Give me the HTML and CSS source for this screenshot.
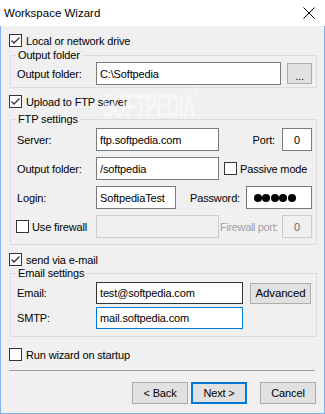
FILE: index.html
```html
<!DOCTYPE html>
<html lang="en">
<head>
  <meta charset="UTF-8">
  <meta name="viewport" content="width=device-width, initial-scale=1.0">
  <title>Workspace Wizard</title>
  <link rel="stylesheet" href="styles.css">
</head>
<body>
  <div class="window">
    <div class="titlebar">
      <span class="title">Workspace Wizard</span>
      <svg class="close" width="12" height="12" viewBox="0 0 12 12"><path d="M0.5 0.5 L11.5 11.5 M11.5 0.5 L0.5 11.5" stroke="#000" stroke-width="1" fill="none"/></svg>
    </div>
    <div class="client">
      <label class="check first"><span class="box"><svg width="11" height="11" viewBox="0 0 11 11"><path d="M1.5 5.5 L4 8 L9.5 2.5" stroke="#333" stroke-width="1.3" fill="none"/></svg></span>Local or network drive</label>

      <fieldset class="group g-output">
        <legend>Output folder</legend>
        <div class="row r-first">
          <span class="lbl">Output folder:</span>
          <input class="field w-path" value="C:\Softpedia">
          <button class="btn dots">...</button>
        </div>
      </fieldset>

      <label class="check spaced"><span class="box"><svg width="11" height="11" viewBox="0 0 11 11"><path d="M1.5 5.5 L4 8 L9.5 2.5" stroke="#333" stroke-width="1.3" fill="none"/></svg></span>Upload to FTP server</label>

      <fieldset class="group g-ftp">
        <legend>FTP settings</legend>
        <div class="row r-first">
          <span class="lbl">Server:</span>
          <input class="field w-mid" value="ftp.softpedia.com">
          <span class="push">Port:</span>
          <input class="field w-port" value="0">
        </div>
        <div class="row">
          <span class="lbl">Output folder:</span>
          <input class="field w-mid" value="/softpedia">
          <label class="check passive"><span class="box"></span>Passive mode</label>
        </div>
        <div class="row">
          <span class="lbl">Login:</span>
          <input class="field w-login" value="SoftpediaTest">
          <span class="pass-lbl">Password:</span>
          <span class="field pass"><i></i><i></i><i></i><i></i><i></i></span>
        </div>
        <div class="row">
          <label class="check fw"><span class="box"></span>Use firewall</label>
          <input class="field w-mid off" disabled>
          <span class="fw-lbl">Firewall port:</span>
          <input class="field w-port off" value="0" disabled>
        </div>
      </fieldset>

      <label class="check near"><span class="box"><svg width="11" height="11" viewBox="0 0 11 11"><path d="M1.5 5.5 L4 8 L9.5 2.5" stroke="#333" stroke-width="1.3" fill="none"/></svg></span>send via e-mail</label>

      <fieldset class="group g-mail">
        <legend>Email settings</legend>
        <div class="row r-first">
          <span class="lbl">Email:</span>
          <input class="field w-mail hover" value="test@softpedia.com">
          <button class="btn adv">Advanced</button>
        </div>
        <div class="row r-smtp">
          <span class="lbl">SMTP:</span>
          <input class="field w-mail focus" value="mail.softpedia.com">
        </div>
      </fieldset>

      <label class="check startup"><span class="box"></span>Run wizard on startup</label>

      <div class="sep"></div>

      <div class="buttons">
        <button class="btn nav">&lt; Back</button>
        <button class="btn nav default">Next &gt;</button>
        <button class="btn nav cancel">Cancel</button>
      </div>
    </div>
    <div class="watermark">SOFTPEDIA<sup>®</sup></div>
  </div>
</body>
</html>
```

FILE: styles.css
```css
body { margin: 0; font-family: "Liberation Sans", Arial, sans-serif; font-size: 11px; letter-spacing: -0.15px; color: #000; background: #fff; }
.window { width: 325px; height: 414px; display: flex; flex-direction: column; position: relative; overflow: hidden; }
.titlebar { height: 26px; flex: none; background: #fff; display: flex; align-items: center; justify-content: space-between; padding: 0 10px 0 4px; }
.title { font-size: 11.5px; letter-spacing: 0; }
.client { flex: 1; background: #f0f0f0; border: 1px solid #7eb4ea; border-top: 0; padding: 0 8px; }

.check { display: flex; align-items: center; height: 13px; gap: 4px; white-space: nowrap; }
.box { width: 13px; height: 13px; flex: none; box-sizing: border-box; border: 1px solid #333; background: #fff; display: flex; align-items: center; justify-content: center; }
.box svg { display: block; }
.first { margin-top: 8px; }
.spaced { margin-top: 7px; }
.near { margin-top: 8px; }
.startup { margin-top: 11px; }

.group { margin: 3px 0 0 1px; padding: 0 4px 2px 6px; border: 1px solid #dcdcdc; width: 307px; box-sizing: border-box; min-width: 0; }
.group legend { padding: 0 2px; margin-left: -1px; line-height: 11px; }
.g-ftp { margin-top: 6px; padding-bottom: 6px; }
.g-mail { margin-top: 2px; padding-bottom: 7px; }

.row { display: flex; align-items: center; margin-top: 6px; }
.row.r-first { margin-top: 1px; }
.g-ftp .r-first, .g-mail .r-first { margin-top: 3px; }
.row.r-smtp { margin-top: 3px; }
.lbl { width: 79px; flex: none; }

.field { height: 23px; box-sizing: border-box; border: 1px solid #7a7a7a; padding: 0 3px; margin: 0; font: inherit; letter-spacing: inherit; color: #000; background: #fff; outline: none; }
.w-path { width: 185px; }
.w-mid { width: 123px; }
.w-port { width: 30px; text-align: center; }
.w-login { width: 80px; }
.w-mail { width: 147px; height: 22px; }
.field.hover { border-color: #333; }
.field.focus { border-color: #0078d7; }
.field.off { background: #f0f0f0; border-color: #cccccc; color: #6d6d6d; }

.push { margin-left: auto; margin-right: 7px; }
.passive { margin-left: 5px; gap: 3px; }
.pass-lbl { margin-left: 14px; }
.pass { margin-left: auto; width: 66px; display: flex; align-items: center; padding-left: 7px; gap: 0; }
.pass i { width: 8px; height: 8px; border-radius: 50%; background: #000; margin-right: 0.4px; }
.fw { width: 80px; margin-left: -1px; gap: 3px; }
.fw-lbl { margin-left: 1px; color: #a0a0a0; letter-spacing: -0.35px; }
.fw-lbl + .field { margin-left: auto; }

.btn { background: #e1e1e1; border: 1px solid #adadad; font: inherit; letter-spacing: inherit; color: #000; padding: 0; margin: 0; box-sizing: border-box; }
.dots { width: 25px; height: 21px; margin-left: 6px; line-height: 24px; }
.adv { width: 61px; height: 21px; margin-left: 7px; font-size: 11.5px; }

.sep { margin-top: 9px; width: 306px; border-top: 1px solid #a0a0a0; }
.buttons { display: flex; justify-content: flex-end; margin-top: 11px; }
.nav { width: 56px; height: 22px; }
.default { border: 2px solid #0078d7; margin-left: 3px; }
.cancel { margin-left: 13px; }

.watermark { position: absolute; left: 102px; top: 86px; font-weight: bold; font-size: 34px; letter-spacing: -1px; color: rgba(255, 255, 255, 0.5); transform: scaleX(0.5); transform-origin: left top; pointer-events: none; }
.watermark sup { font-size: 10px; vertical-align: top; }
```
